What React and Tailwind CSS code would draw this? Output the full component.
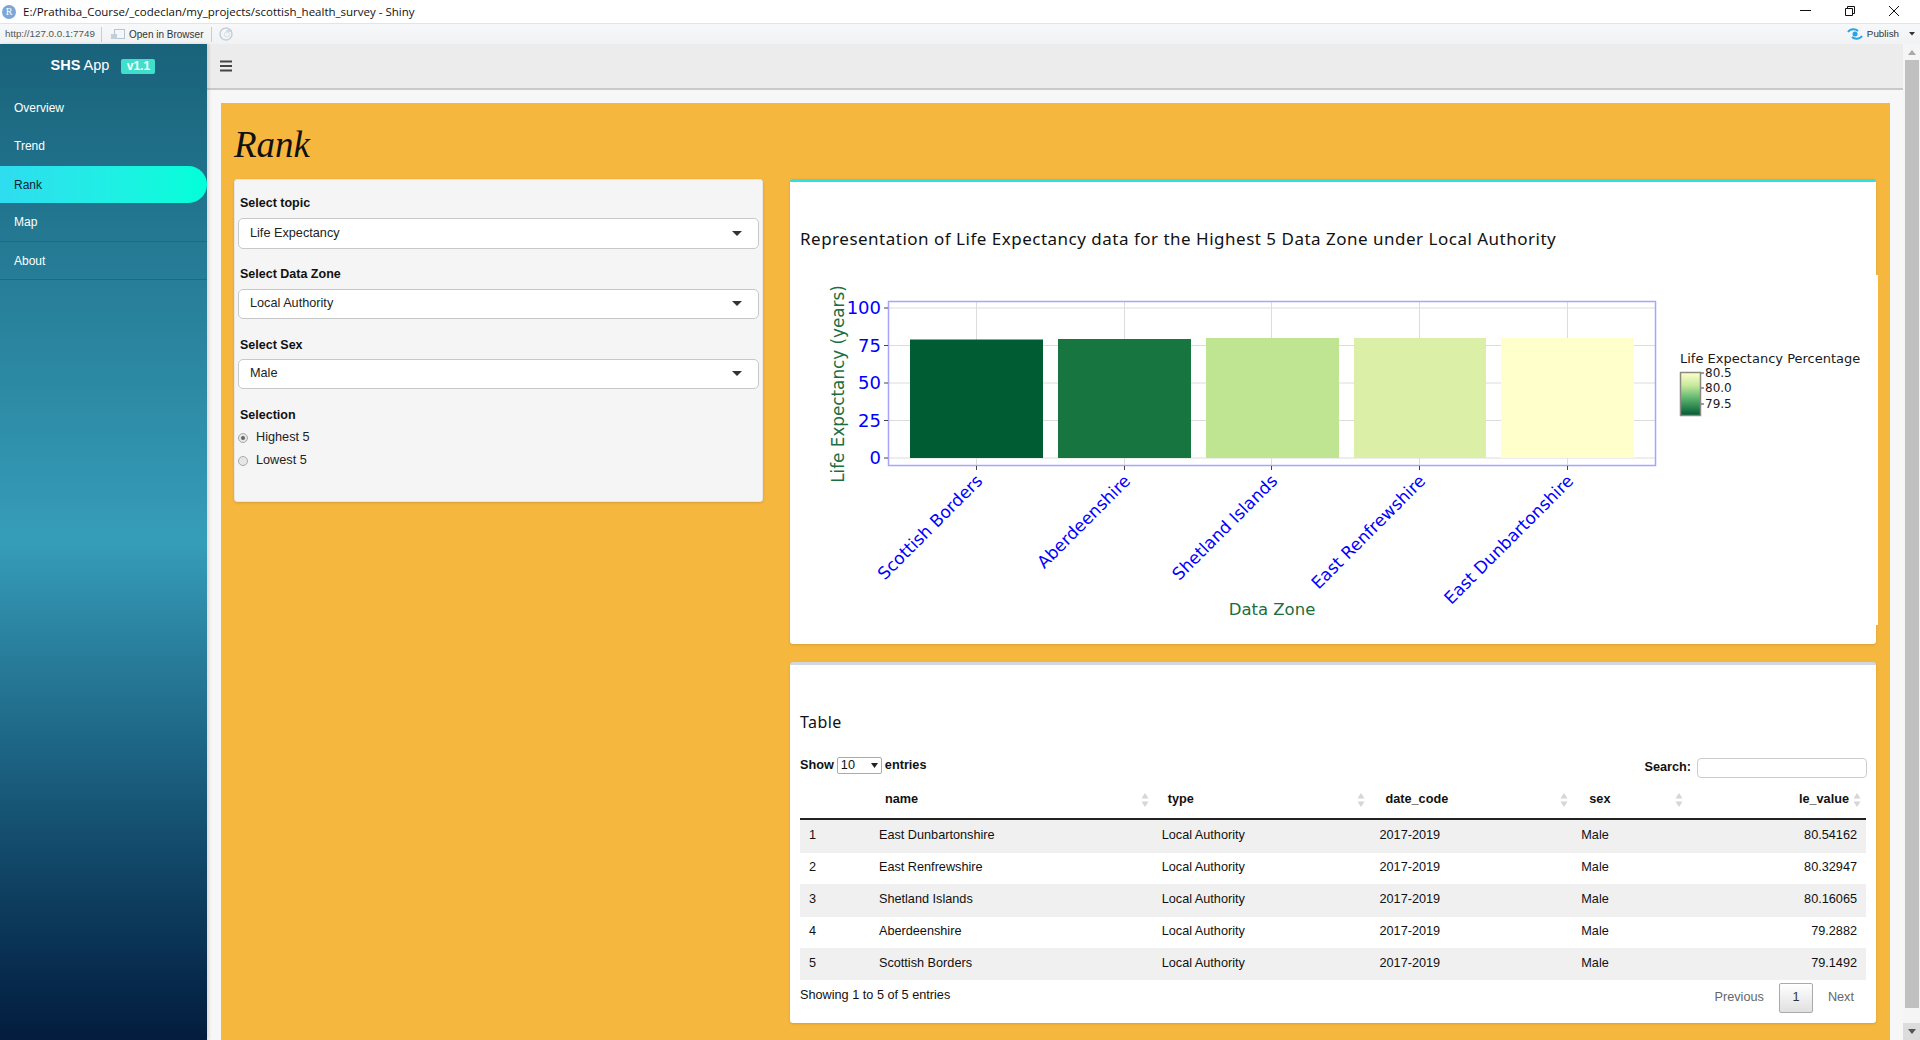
import React from "react";

const arial = "font-['Liberation_Sans',Arial,sans-serif]";

const navItems = [
  { label: "Overview", h: "h-[39px]" },
  { label: "Trend", h: "h-[39px] pb-[2px]" },
  { label: "Rank", h: "h-[37px]", active: true },
  { label: "Map", h: "h-[39px]", line: true },
  { label: "About", h: "h-[38px]", line: true },
];

const rows = [
  ["1", "East Dunbartonshire", "80.54162", "h-[33px]", true],
  ["2", "East Renfrewshire", "80.32947", "h-[31px]", false],
  ["3", "Shetland Islands", "80.16065", "h-[33px]", true],
  ["4", "Aberdeenshire", "79.2882", "h-[31px]", false],
  ["5", "Scottish Borders", "79.1492", "h-[32px]", true],
];

const bars = [
  { x: 910, y: 339.5, w: 133, fill: "#005c33", tick: 976.5, label: "Scottish Borders" },
  { x: 1058, y: 339, w: 133, fill: "#17763f", tick: 1124.5, label: "Aberdeenshire" },
  { x: 1206, y: 338, w: 133, fill: "#bfe593", tick: 1271.5, label: "Shetland Islands" },
  { x: 1354, y: 338, w: 132, fill: "#dcefa6", tick: 1419.5, label: "East Renfrewshire" },
  { x: 1501, y: 338, w: 133, fill: "#ffffcc", tick: 1567.5, label: "East Dunbartonshire" },
];

function Caret() {
  return (
    <svg width="11" height="6" viewBox="0 0 11 6" className="shrink-0">
      <path d="M0 0h10L5 5z" fill="#333" />
    </svg>
  );
}

function SelectInput({ label, value, box, gap, mb }) {
  return (
    <div className={mb}>
      <div className={`h-[16px] pl-[2px] text-[12.500px] font-bold leading-[16px] text-[#111] ${gap}`}>{label}</div>
      <div className={`flex items-center justify-between rounded-[5px] border border-[#c8c8c8] bg-white pl-[11px] pr-[15px] text-[12.700px] text-[#222] ${box}`}>
        <span>{value}</span>
        <Caret />
      </div>
    </div>
  );
}

function Radio({ label, checked }) {
  return (
    <div className="flex h-[23px] items-center">
      <span className="flex h-[10px] w-[10px] items-center justify-center rounded-full border border-[#aaa] bg-[#e6e6e6]">
        {checked && <span className="h-[4px] w-[4px] rounded-full bg-[#666]" />}
      </span>
      <span className="ml-[8px] text-[12.700px] text-[#222]">{label}</span>
    </div>
  );
}

function SortIcon() {
  return (
    <svg width="8" height="14" viewBox="0 0 8 14" className="shrink-0">
      <path d="M4 0l3.500 5.500h-7z" fill="#d6d6d6" />
      <path d="M4 14l3.500-5.500h-7z" fill="#d6d6d6" />
    </svg>
  );
}

function Th({ w, pl, right, children }) {
  return (
    <div className={`flex h-full items-center ${w}`}>
      <div className={`flex-1 ${pl} ${right ? "pr-[4px] text-right" : ""}`}>{children}</div>
      <div className="pr-[5px]"><SortIcon /></div>
    </div>
  );
}

function Chart() {
  const vf = "'DejaVu Sans',Verdana,sans-serif";
  const grid = [308, 345.5, 383, 420.5, 458];
  return (
    <svg width="1088" height="350" viewBox="790 275 1088 350" className="block bg-white">
      <defs>
        <linearGradient id="cb" x1="0" y1="0" x2="0" y2="1">
          <stop offset="0" stopColor="#ffffcc" />
          <stop offset="0.3" stopColor="#c6e99c" />
          <stop offset="0.6" stopColor="#5db56f" />
          <stop offset="1" stopColor="#005a32" />
        </linearGradient>
      </defs>
      {bars.map((b) => (
        <line key={b.tick} x1={b.tick} x2={b.tick} y1="301" y2="466" stroke="#dcdcdc" />
      ))}
      {grid.map((y) => (
        <line key={y} x1="888" x2="1656" y1={y} y2={y} stroke="#dcdcdc" />
      ))}
      {bars.map((b) => (
        <rect key={b.x} x={b.x} y={b.y} width={b.w} height={458 - b.y} fill={b.fill} />
      ))}
      <rect x="888.5" y="301.5" width="767" height="164" fill="none" stroke="#a5a5ff" strokeWidth="1.5" />
      {[["100", 308], ["75", 345.5], ["50", 383], ["25", 420.5], ["0", 458]].map(([t, y]) => (
        <g key={t}>
          <line x1="884" x2="888" y1={y} y2={y} stroke="#444" />
          <text x="881" y={y + 6} textAnchor="end" fontSize="18" fill="#0000ff" fontFamily={vf}>{t}</text>
        </g>
      ))}
      {bars.map((b) => (
        <g key={b.label}>
          <line x1={b.tick} x2={b.tick} y1="466" y2="470" stroke="#444" />
          <text
            transform={`translate(${b.tick + 7} 482) rotate(-45)`}
            textAnchor="end"
            fontSize="17"
            fill="#0000ff"
            fontFamily={vf}
          >
            {b.label}
          </text>
        </g>
      ))}
      <text transform="translate(844 384) rotate(-90)" textAnchor="middle" fontSize="16.800" fill="#1b6e3e" fontFamily={vf}>
        Life Expectancy (years)
      </text>
      <text x="1272" y="615" textAnchor="middle" fontSize="16.500" fill="#1b6e3e" fontFamily={vf}>Data Zone</text>
      <text x="1680" y="363" fontSize="13" fill="#1a1a1a" fontFamily={vf}>Life Expectancy Percentage</text>
      <rect x="1680.5" y="372.5" width="20" height="43" fill="url(#cb)" stroke="#8a8a80" strokeWidth="1.5" />
      {[["80.5", 373], ["80.0", 388], ["79.5", 404]].map(([t, y]) => (
        <g key={t}>
          <line x1="1701" x2="1704" y1={y} y2={y} stroke="#444" />
          <text x="1705" y={y + 4} fontSize="12" fill="#1a1a1a" fontFamily={vf}>{t}</text>
        </g>
      ))}
    </svg>
  );
}

export default function App() {
  return (
    <div className={`flex h-[1040px] w-[1920px] flex-col overflow-hidden bg-white ${arial} text-[12.700px]`}>
      {/* window title bar */}
      <div className="flex h-[24px] shrink-0 items-center border-b border-[#e4e4e4] bg-white">
        <span className="ml-[2px] flex h-[14px] w-[14px] items-center justify-center rounded-full bg-[#7da6d8] font-['Liberation_Serif',serif] text-[10px] text-white">R</span>
        <span className="ml-[7px] flex-1 font-['Open_Sans',sans-serif] text-[11.500px] text-[#111]">
          E:/Prathiba_Course/_codeclan/my_projects/scottish_health_survey - Shiny
        </span>
        <svg width="140" height="23" viewBox="0 0 140 23">
          <path d="M20 10.500h11" stroke="#111" />
          <path d="M65.500 8.500h7v7h-7zM67.500 8.500v-2h7v7h-2" fill="none" stroke="#111" />
          <path d="M109 6l10 10M119 6l-10 10" stroke="#111" />
        </svg>
      </div>
      {/* RStudio address bar */}
      <div className="flex h-[20px] shrink-0 items-center bg-gradient-to-b from-[#f6f8fa] to-[#f0f2f3] text-[10px] text-[#333]">
        <span className="ml-[5px] w-[96px] text-[9.800px] text-[#555]">http://127.0.0.1:7749</span>
        <span className="h-[15px] w-px bg-[#ccc]" />
        <svg width="16" height="12" viewBox="0 0 16 12" className="ml-[8px]">
          <rect x="4.500" y="1.500" width="10" height="9" fill="#f4f6f8" stroke="#b8c4cf" />
          <rect x="1" y="6" width="6" height="5" fill="#c4ced8" />
        </svg>
        <span className="ml-[3px] w-[82px]">Open in Browser</span>
        <span className="h-[15px] w-px bg-[#ccc]" />
        <svg width="16" height="16" viewBox="0 0 16 16" className="ml-[6px]">
          <circle cx="8" cy="8" r="6" fill="none" stroke="#c6d0d8" strokeWidth="1.500" />
          <path d="M8 5h6" stroke="#c6d0d8" strokeWidth="1.500" />
          <circle cx="9" cy="8.500" r="2.500" fill="none" stroke="#d8e0e6" />
        </svg>
        <span className="flex-1" />
        <svg width="16" height="14" viewBox="0 0 16 14">
          <path d="M1 5C4 1 9 2 11 4" fill="none" stroke="#2aa3e6" strokeWidth="2" />
          <path d="M15 9c-3 4-8 3-10 1" fill="none" stroke="#2aa3e6" strokeWidth="2" />
          <circle cx="8" cy="7" r="2.500" fill="#2aa3e6" />
        </svg>
        <span className="ml-[4px] text-[9.800px] text-[#333]">Publish</span>
        <svg width="6" height="4" viewBox="0 0 6 4" className="ml-[10px] mr-[5px]">
          <path d="M0 0h6L3 3.500z" fill="#333" />
        </svg>
      </div>

      <div className="flex min-h-0 flex-1">
        {/* sidebar */}
        <aside className="relative z-10 flex w-[207px] shrink-0 flex-col bg-gradient-to-b from-[#19627a] via-[#369db9] via-50% to-[#041c3e] text-white shadow-[2px_0_3px_rgba(0,0,0,0.12)]">
          <div className="flex h-[44px] items-center justify-center gap-[12px] pr-[1px]">
            <span className="text-[14.500px]"><b>SHS</b> App</span>
            <span className="flex h-[15px] w-[34px] items-center justify-center rounded-[2px] bg-[#40dfcb] text-[12px] font-bold">v1.1</span>
          </div>
          <nav className="flex flex-col text-[12px]">
            {navItems.map((n) => (
              <div
                key={n.label}
                className={`flex items-center pl-[14px] ${n.h} ${
                  n.active
                    ? "rounded-r-full bg-gradient-to-r from-[#2fdcf0] to-[#00ffd8] text-[#123]"
                    : n.line
                      ? "border-b border-[#1c6a84]"
                      : ""
                }`}
              >
                {n.label}
              </div>
            ))}
          </nav>
        </aside>

        {/* main column */}
        <div className="flex min-w-0 flex-1 flex-col bg-[#f7f7f7]">
          <header className="flex h-[46px] shrink-0 items-center border-b-2 border-[#c9c9c9] bg-[#ececec] pl-[13px]">
            <svg width="12" height="12" viewBox="0 0 12 12">
              <path d="M0 1.500h12M0 6h12M0 10.500h12" stroke="#444" strokeWidth="2" />
            </svg>
          </header>
          <div className="min-h-0 flex-1 pl-[14px] pr-[13px] pt-[13px]">
            <div className="h-full overflow-hidden bg-[#f6b73f] px-[13px]">
              <h1 className="flex h-[76px] items-center pt-[6px] font-['Liberation_Serif',serif] text-[37px] italic leading-none text-[#111]">Rank</h1>
              <div className="flex items-start gap-[27px]">
                {/* controls */}
                <div className="h-[323px] w-[529px] shrink-0 rounded-[3px] border border-[#e6e6e6] bg-[#f5f5f5] px-[3px] pt-[15px] shadow-sm">
                  <SelectInput label="Select topic" value="Life Expectancy" box="h-[31px]" gap="mb-[7px]" mb="mb-[17px]" />
                  <SelectInput label="Select Data Zone" value="Local Authority" box="h-[30px]" gap="mb-[7px]" mb="mb-[18px]" />
                  <SelectInput label="Select Sex" value="Male" box="h-[30px]" gap="mb-[6px]" mb="mb-[18px]" />
                  <div className="h-[16px] pl-[2px] text-[12.500px] font-bold leading-[16px] text-[#111]">Selection</div>
                  <div className="mt-[3px]">
                    <Radio label="Highest 5" checked />
                    <Radio label="Lowest 5" />
                  </div>
                </div>

                {/* right column */}
                <div className="flex w-[1086px] flex-col gap-[18px]">
                  <section className="h-[465px] rounded-[3px] border-t-[3px] border-[#2ee0e8] bg-white shadow-sm">
                    <h2 className="h-[93px] pl-[10px] pt-[47px] font-['Noto_Sans',sans-serif] text-[17px] leading-[20px] tracking-[0.5px] text-[#111]">
                      Representation of Life Expectancy data for the Highest 5 Data Zone under Local Authority
                    </h2>
                    <Chart />
                  </section>

                  <section className="h-[361px] rounded-[3px] border-t-[3px] border-[#d2d6de] bg-white shadow-sm">
                    <h2 className="h-[87px] pl-[10px] pt-[47px] font-['Noto_Sans',sans-serif] text-[16px] leading-[20px] tracking-[0.4px] text-[#111]">Table</h2>
                    <div className="ml-[10px] mr-[9px] flex items-center justify-between text-[#111]">
                      <div className="flex items-center pt-[2px] font-bold">
                        Show
                        <span className="mx-[3px] flex h-[17px] w-[45px] items-center justify-between rounded-[2px] border border-[#aaa] px-[3px] font-normal">
                          10
                          <svg width="7" height="5" viewBox="0 0 7 5"><path d="M0 0h7L3.500 5z" fill="#222" /></svg>
                        </span>
                        <span>entries</span>
                      </div>
                      <div className="flex items-center pt-[6px] font-bold">
                        Search:
                        <span className="ml-[6px] h-[20px] w-[170px] rounded-[4px] border border-[#ccc] bg-white" />
                      </div>
                    </div>
                    <div className="mx-[10px] mt-[2px] text-[#111]">
                      <div className="flex h-[40px] items-center border-b-[2px] border-[#222] pt-[2px] font-bold">
                        <Th w="w-[354px]" pl="pl-[85px]">name</Th>
                        <Th w="w-[217px]" pl="pl-[14px]">type</Th>
                        <Th w="w-[203px]" pl="pl-[15px]">date_code</Th>
                        <Th w="w-[115px]" pl="pl-[16px]">sex</Th>
                        <Th w="w-[178px]" right>le_value</Th>
                      </div>
                      {rows.map(([id, name, val, h, shaded]) => (
                        <div key={id} className={`flex items-center pb-[1px] ${h} ${shaded ? "bg-[#f0f0f0]" : ""}`}>
                          <span className="w-[79px] pl-[9px]">{id}</span>
                          <span className="w-[283px]">{name}</span>
                          <span className="w-[218px]">Local Authority</span>
                          <span className="w-[202px]">2017-2019</span>
                          <span className="w-[118px]">Male</span>
                          <span className="w-[167px] pr-[9px] text-right">{val}</span>
                        </div>
                      ))}
                      <div className="mt-[3px] flex h-[30px] items-center justify-between">
                        <span className="pb-[4px]">Showing 1 to 5 of 5 entries</span>
                        <div className="flex items-center text-[#666]">
                          <span className="mr-[15px]">Previous</span>
                          <span className="flex h-[30px] w-[34px] items-center justify-center rounded-[2px] border border-[#aaa] bg-gradient-to-b from-white to-[#e0e0e0] text-[#333]">1</span>
                          <span className="ml-[15px] mr-[12px]">Next</span>
                        </div>
                      </div>
                    </div>
                  </section>
                </div>
              </div>
            </div>
          </div>
        </div>

        {/* scrollbar */}
        <div className="flex w-[17px] shrink-0 flex-col bg-[#f5f5f5]">
          <div className="flex h-[16px] items-center justify-center">
            <svg width="8" height="5" viewBox="0 0 8 5"><path d="M4 0l4 5H0z" fill="#a8a8a8" /></svg>
          </div>
          <div className="ml-[2px] mr-px h-[948px] bg-[#c0c0c0]" />
          <div className="flex-1" />
          <div className="flex h-[17px] items-center justify-center bg-[#dcdcdc]">
            <svg width="8" height="5" viewBox="0 0 8 5"><path d="M0 0h8L4 5z" fill="#555" /></svg>
          </div>
        </div>
      </div>
    </div>
  );
}
